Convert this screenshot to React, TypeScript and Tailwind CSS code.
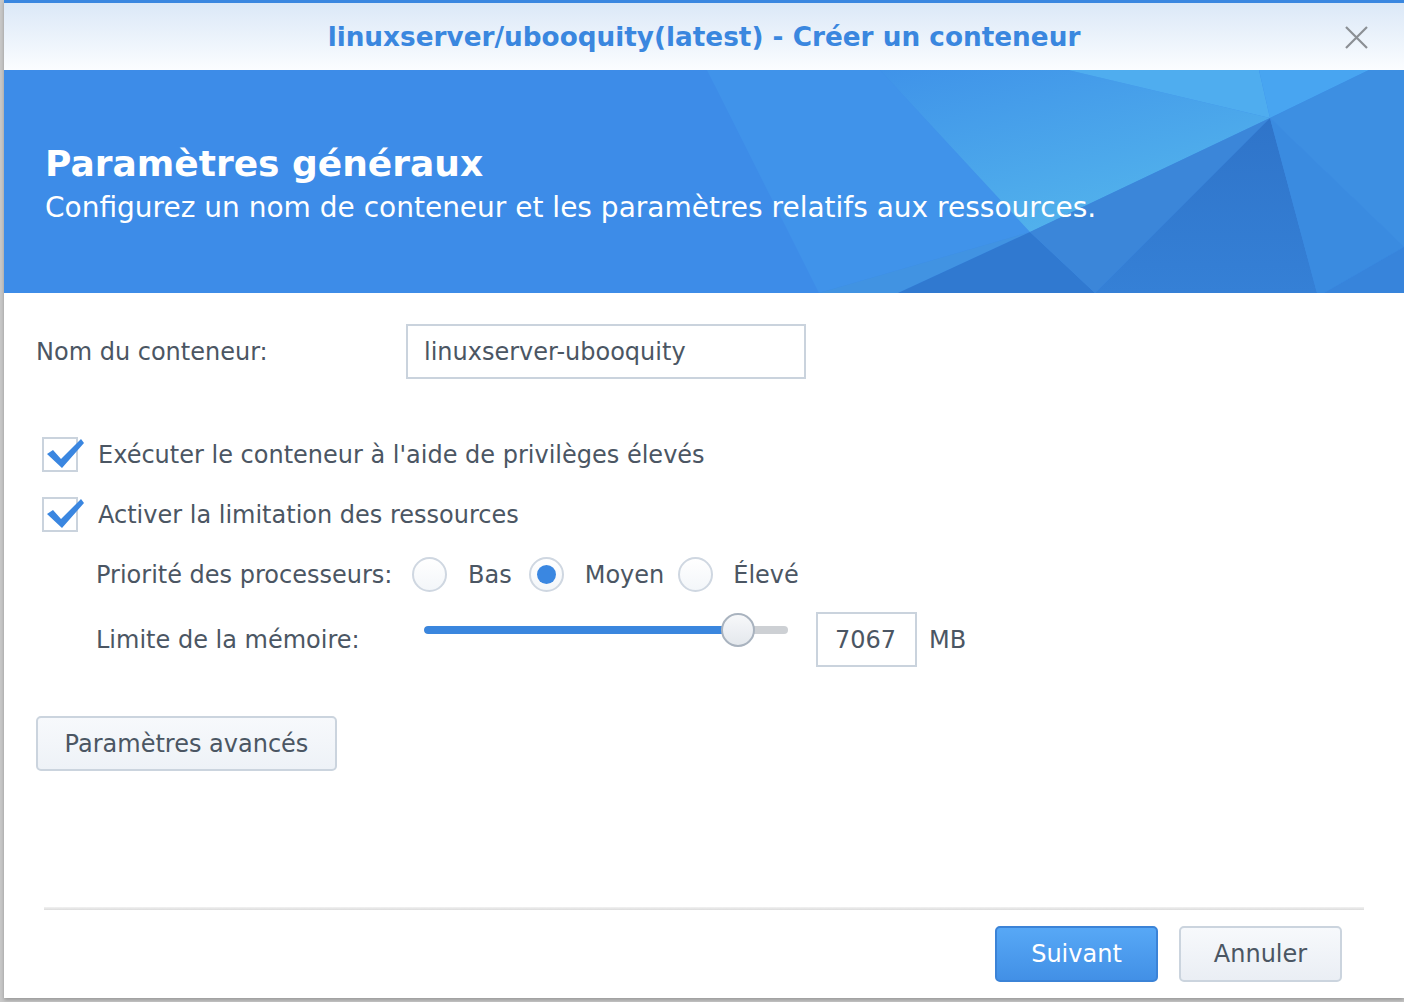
const FONT = "font-['DejaVu_Sans',Verdana,sans-serif]";

function CheckBox({ label }: { label: string }) {
  return (
    <div className="flex h-[35px] items-center">
      <div className="relative ml-[38px] h-[35px] w-[36px] border-2 border-[#cad3dd] bg-white">
        <svg
          className="absolute left-[1px] top-[-2px]"
          width="40"
          height="36"
          viewBox="0 0 40 36"
        >
          <path
            d="M2 17 L8 13 L16 22 L36 2 L39 6 L17 31 Z"
            fill="#3a86e0"
          />
        </svg>
      </div>
      <span className="ml-[20px] text-[24px] text-[#4b5663]">{label}</span>
    </div>
  );
}

function Radio({ checked }: { checked?: boolean }) {
  return (
    <div className="flex h-[35px] w-[35px] items-center justify-center rounded-full border-2 border-[#cfd7e1] bg-gradient-to-b from-white to-[#f3f6f9]">
      {checked && <div className="h-[19px] w-[19px] rounded-full bg-[#3a87e1]" />}
    </div>
  );
}

function BannerArt() {
  return (
    <svg
      className="absolute inset-0"
      width="1400"
      height="223"
      viewBox="0 0 1400 223"
      preserveAspectRatio="none"
    >
      <defs>
        <linearGradient id="mid" x1="0" y1="0" x2="0.6" y2="1">
          <stop offset="0" stopColor="#3f93e9" />
          <stop offset="1" stopColor="#53b4ec" />
        </linearGradient>
        <linearGradient id="dk" x1="0" y1="0" x2="0" y2="1">
          <stop offset="0" stopColor="#2f74c9" />
          <stop offset="1" stopColor="#3580d6" />
        </linearGradient>
      </defs>
      <polygon points="703,0 876,0 1026,162 815,223" fill="#4093ea" />
      <polygon points="876,0 1064,0 1266,48 1026,162" fill="url(#mid)" />
      <polygon points="1064,0 1255,0 1266,48" fill="#4fadef" />
      <polygon points="1255,0 1365,0 1266,48" fill="#48a5f1" />
      <polygon points="1365,0 1400,0 1400,177 1266,48" fill="#3d8fe2" />
      <polygon points="815,223 1026,162 894,223" fill="#4193e2" />
      <polygon points="894,223 1026,162 1091,223" fill="#3079d0" />
      <polygon points="1026,162 1266,48 1091,223" fill="#3b86d9" />
      <polygon points="1091,223 1266,48 1313,223" fill="url(#dk)" />
      <polygon points="1313,223 1266,48 1400,177 1320,223" fill="#3a8be0" />
      <polygon points="1320,223 1400,177 1400,223" fill="#3784db" />
    </svg>
  );
}

export default function App() {
  return (
    <div className={`${FONT} h-[1002px] w-[1404px] overflow-hidden bg-[#c9c9c9]`}>
      <div className="ml-[4px] flex h-[998px] w-[1400px] flex-col bg-white shadow-[0_2px_4px_rgba(0,0,0,0.25)]">
        {/* Title bar */}
        <div className="relative flex h-[70px] shrink-0 items-center justify-center border-t-[3px] border-[#3a87e0] bg-gradient-to-b from-[#dbe8f7] to-[#fbfdff] pt-[3px]">
          <span className="text-[26.3px] font-bold text-[#3a87df]">
            linuxserver/ubooquity(latest) - Créer un conteneur
          </span>
          <svg
            className="absolute right-[35px] top-[22px]"
            width="25"
            height="25"
            viewBox="0 0 25 25"
          >
            <path d="M2 2 L23 23 M23 2 L2 23" stroke="#8b8f94" strokeWidth="2.2" />
          </svg>
        </div>

        {/* Banner */}
        <div className="relative h-[223px] shrink-0 overflow-hidden bg-[#3d8ce8]">
          <BannerArt />
          <div className="relative pl-[41px] pt-[72px] text-white">
            <div className="text-[36px] font-bold leading-[44px]">Paramètres généraux</div>
            <div className="mt-[2px] text-[28px] leading-[40px]">
              Configurez un nom de conteneur et les paramètres relatifs aux ressources.
            </div>
          </div>
        </div>

        {/* Body */}
        <div className="flex grow flex-col text-[#4b5663]">
          <div className="mt-[31px] flex h-[55px] items-center">
            <span className="ml-[32px] w-[370px] text-[24px]">Nom du conteneur:</span>
            <div className="flex h-[55px] w-[400px] items-center border-2 border-[#cad3dd] px-[16px] text-[24px]">
              linuxserver-ubooquity
            </div>
          </div>

          <div className="mt-[58px] flex flex-col gap-[25px]">
            <CheckBox label="Exécuter le conteneur à l'aide de privilèges élevés" />
            <CheckBox label="Activer la limitation des ressources" />
          </div>

          <div className="mt-[25px] flex h-[35px] items-center text-[24px]">
            <span className="ml-[92px] w-[316px]">Priorité des processeurs:</span>
            <Radio />
            <span className="ml-[21px] mr-[17px]">Bas</span>
            <Radio checked />
            <span className="ml-[21px] mr-[14px]">Moyen</span>
            <Radio />
            <span className="ml-[20px]">Élevé</span>
          </div>

          <div className="mt-[20px] flex h-[55px] items-center text-[24px]">
            <span className="ml-[92px] w-[316px]">Limite de la mémoire:</span>
            <div className="relative mb-[20px] flex h-[40px] w-[388px] items-center px-[12px]">
              <div className="flex h-[8px] w-full overflow-hidden rounded-full bg-[#cdd0d4]">
                <div className="h-full w-[314px] rounded-full bg-[#3a86de]" />
              </div>
              <div className="absolute left-[309px] top-[3px] h-[34px] w-[34px] rounded-full border-2 border-[#a9b3bf] bg-gradient-to-b from-[#f7f8fa] to-[#e4e8ed]" />
            </div>
            <div className="ml-[16px] flex h-[55px] w-[101px] items-center border-2 border-[#cad3dd] pl-[17px]">
              7067
            </div>
            <span className="ml-[12px]">MB</span>
          </div>

          <div className="ml-[32px] mt-[49px]">
            <button className="flex h-[55px] w-[301px] items-center justify-center rounded-[5px] border-2 border-[#cbd4de] bg-gradient-to-b from-[#f7f9fc] to-[#eef2f7] text-[24px] text-[#4b5663]">
              Paramètres avancés
            </button>
          </div>
        </div>

        {/* Footer */}
        <div className="mx-[40px] h-[3px] shrink-0 bg-gradient-to-b from-[#f2f2f2] to-[#dcdcdc]" />
        <div className="flex h-[88px] shrink-0 justify-end gap-[21px] pr-[62px] pt-[16px]">
          <button className="flex h-[56px] w-[163px] items-center justify-center rounded-[5px] border-2 border-[#3b83d7] bg-gradient-to-b from-[#57a8f6] to-[#4290e6] text-[24px] text-white">
            Suivant
          </button>
          <button className="flex h-[56px] w-[163px] items-center justify-center rounded-[5px] border-2 border-[#cbd4de] bg-gradient-to-b from-[#f7f9fc] to-[#eaeef4] text-[24px] text-[#4b5663]">
            Annuler
          </button>
        </div>
      </div>
    </div>
  );
}
